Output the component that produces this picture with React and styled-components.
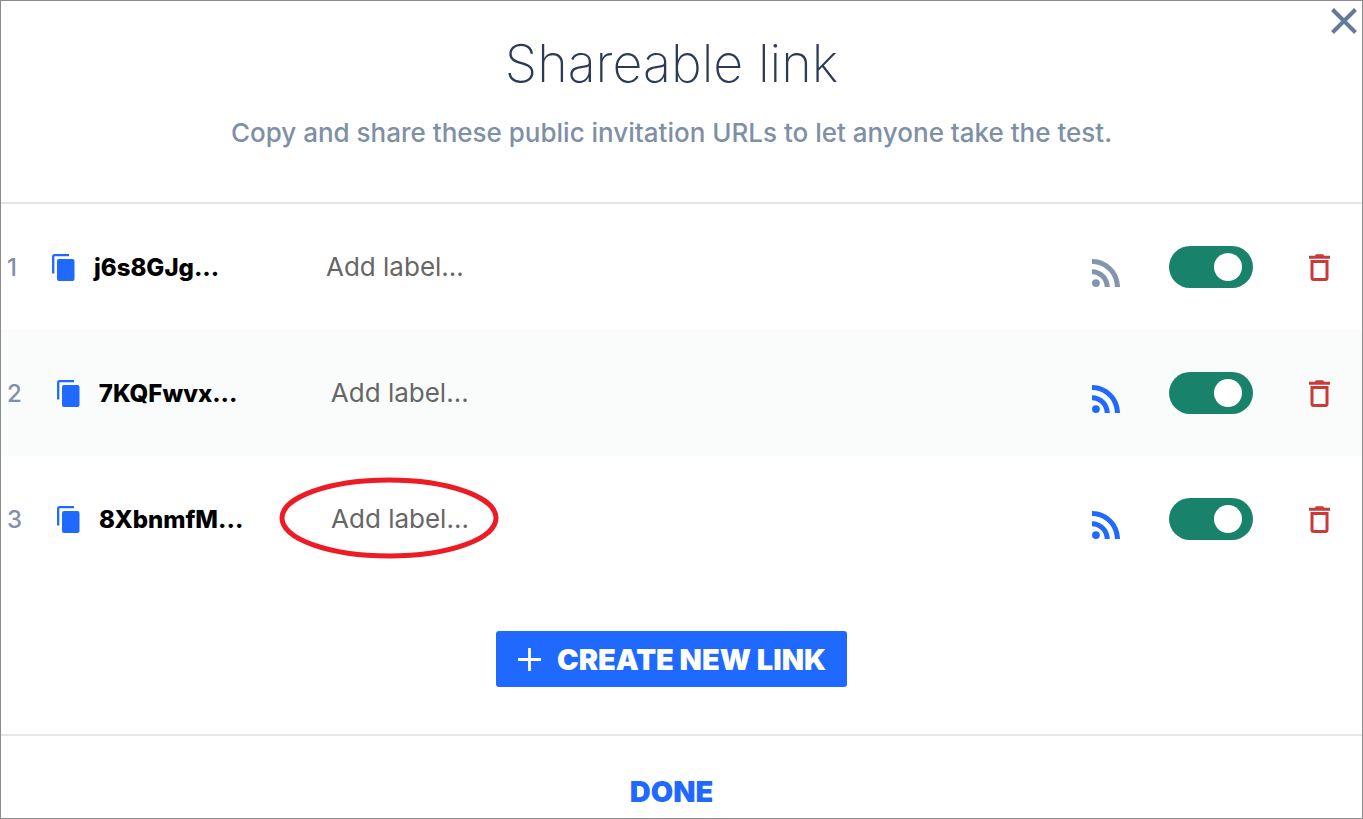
import React, { useState } from 'react'
import styled, { createGlobalStyle } from 'styled-components'

const GlobalStyle = createGlobalStyle`
  *, *::before, *::after {
    box-sizing: border-box;
  }

  body {
    margin: 0;
    background: #fff;
    font-family: Inter, 'Open Sans', sans-serif;
  }

  button, input {
    font: inherit;
  }
`

const Dialog = styled.main`
  position: relative;
  display: flex;
  flex-direction: column;
  min-height: 100vh;
  border: 1px solid #8c8c8c;
`

const PlainButton = styled.button.attrs({ type: 'button' })`
  display: flex;
  flex: none;
  padding: 0;
  border: 0;
  background: none;
  color: ${({ $color }) => $color};
  cursor: pointer;
`

const CloseButton = styled(PlainButton)`
  position: absolute;
  top: 7px;
  right: 5px;
`

const Header = styled.header`
  padding: 33px 32px 54px 12px;
  border-bottom: 2px solid #e6e6e6;
  text-align: center;
`

const Title = styled.h1`
  margin: 0;
  color: #2b3b56;
  font-size: 52px;
  font-weight: 200;
  line-height: 60px;
`

const Subtitle = styled.p`
  margin: 23px 0 0;
  color: #7e8fa6;
  font-size: 26px;
  font-weight: 500;
  line-height: 31px;
`

const LinkList = styled.ul`
  margin: 0;
  padding: 0;
  list-style: none;
`

const LinkRow = styled.li`
  display: flex;
  align-items: center;
  height: 126px;
  padding: 0 32px 0 6px;

  &:nth-child(even) {
    background: #fafcfb;
  }
`

const RowNumber = styled.span`
  margin-right: 35px;
  color: #8090a7;
  font-size: 24px;
  font-weight: 500;
`

const LinkName = styled.span`
  flex: none;
  width: 232px;
  margin-left: 19px;
  color: #000;
  font-size: 24px;
  font-weight: 800;
`

const LabelField = styled.div`
  position: relative;
  flex: 1;
`

const LabelInput = styled.input`
  display: block;
  width: 100%;
  padding: 0;
  border: 0;
  outline: none;
  background: none;
  color: #666;
  font-size: 26px;
  line-height: 32px;

  &::placeholder {
    color: #666;
    opacity: 1;
  }
`

const Highlight = styled.svg`
  position: absolute;
  top: -26px;
  left: -52px;
  pointer-events: none;
`

const FeedButton = styled(PlainButton)`
  margin: 12px 49px 0 24px;
`

const Switch = styled.input.attrs({ type: 'checkbox', role: 'switch' })`
  appearance: none;
  display: flex;
  flex: none;
  align-items: center;
  width: 84px;
  height: 42px;
  margin: 0 56px 0 0;
  padding: 0 11px;
  border-radius: 21px;
  background: #9aa5b5;
  cursor: pointer;

  &::before {
    content: '';
    width: 28px;
    height: 28px;
    border-radius: 50%;
    background: #fff;
  }

  &:checked {
    justify-content: flex-end;
    background: #19826a;
  }
`

const Actions = styled.div`
  display: flex;
  justify-content: center;
  padding: 49px 32px 47px 12px;
`

const CreateButton = styled.button.attrs({ type: 'button' })`
  display: flex;
  align-items: center;
  gap: 16px;
  height: 56px;
  padding: 0 21px 0 22px;
  border: 0;
  border-radius: 3px;
  background: #1f69ff;
  color: #fff;
  font-size: 29px;
  font-weight: 900;
  cursor: pointer;
`

const Footer = styled.footer`
  display: flex;
  justify-content: center;
  padding: 39px 32px 8px 12px;
  border-top: 2px solid #e6e6e6;
`

const DoneButton = styled(PlainButton)`
  font-size: 29px;
  font-weight: 900;
  line-height: 34px;
`

const CloseIcon = () => (
  <svg width="26" height="26" viewBox="0 0 26 26" aria-hidden="true">
    <path d="M1.5 1.5l23 23M24.5 1.5l-23 23" fill="none" stroke="currentColor" strokeWidth="4" />
  </svg>
)

const CopyIcon = () => (
  <svg width="23" height="27" viewBox="0 0 23 27" aria-hidden="true">
    <path d="M1.2 19.5V2.6Q1.2 1.2 2.6 1.2H17" fill="none" stroke="currentColor" strokeWidth="2.3" />
    <rect x="5" y="5" width="17.5" height="22" rx="2" fill="currentColor" />
  </svg>
)

const FeedIcon = () => (
  <svg width="28" height="28" viewBox="4 4.44 15.56 15.56" fill="currentColor" aria-hidden="true">
    <circle cx="6.18" cy="17.82" r="2.18" />
    <path d="M4 4.44v2.83c7.03 0 12.73 5.7 12.73 12.73h2.83c0-8.59-6.97-15.56-15.56-15.56zm0 5.66v2.83c3.9 0 7.07 3.17 7.07 7.07h2.83c0-5.47-4.43-9.9-9.9-9.9z" />
  </svg>
)

const TrashIcon = () => (
  <svg width="21" height="27" viewBox="0 0 21 27" aria-hidden="true">
    <path d="M0 1.8h5.8L7 .2h7l1.2 1.6H21v2.9H0z" fill="currentColor" />
    <path d="M3 7.4h15v16.7q0 1.4-1.4 1.4H4.4q-1.4 0-1.4-1.4z" fill="none" stroke="currentColor" strokeWidth="3" />
  </svg>
)

const PlusIcon = () => (
  <svg width="23" height="23" viewBox="0 0 23 23" aria-hidden="true">
    <path d="M11.5 0v23M0 11.5h23" fill="none" stroke="currentColor" strokeWidth="2.8" />
  </svg>
)

const INITIAL_LINKS = [
  { id: 'j6s8GJg...', hasFeed: false, isActive: true },
  { id: '7KQFwvx...', hasFeed: true, isActive: true },
  { id: '8XbnmfM...', hasFeed: true, isActive: true, isHighlighted: true },
]

const LinkItem = ({ link, number, onToggle, onRemove }) => (
  <LinkRow>
    <RowNumber>{number}</RowNumber>
    <PlainButton $color="#1f69ff" aria-label={`Copy link ${number}`}>
      <CopyIcon />
    </PlainButton>
    <LinkName>{link.id}</LinkName>
    <LabelField>
      <LabelInput placeholder="Add label..." aria-label={`Label for link ${number}`} />
      {link.isHighlighted && (
        <Highlight width="220" height="82" viewBox="0 0 220 82" aria-hidden="true">
          <ellipse cx="110" cy="41" rx="107" ry="38" fill="none" stroke="#ed1c24" strokeWidth="5" />
        </Highlight>
      )}
    </LabelField>
    <FeedButton $color={link.hasFeed ? '#1f69ff' : '#8494aa'} aria-label={`Feed for link ${number}`}>
      <FeedIcon />
    </FeedButton>
    <Switch checked={link.isActive} onChange={onToggle} aria-label={`Link ${number} active`} />
    <PlainButton $color="#c83b38" onClick={onRemove} aria-label={`Delete link ${number}`}>
      <TrashIcon />
    </PlainButton>
  </LinkRow>
)

const App = () => {
  const [links, setLinks] = useState(INITIAL_LINKS)

  const handleToggle = (id) => {
    setLinks(links.map(link => (
      link.id === id ? { ...link, isActive: !link.isActive } : link
    )))
  }

  const handleRemove = (id) => {
    setLinks(links.filter(link => link.id !== id))
  }

  return (
    <>
      <GlobalStyle />
      <Dialog>
        <CloseButton $color="#647997" aria-label="Close">
          <CloseIcon />
        </CloseButton>
        <Header>
          <Title>Shareable link</Title>
          <Subtitle>Copy and share these public invitation URLs to let anyone take the test.</Subtitle>
        </Header>
        <LinkList>
          {links.map((link, index) => (
            <LinkItem
              key={link.id}
              link={link}
              number={index + 1}
              onToggle={() => handleToggle(link.id)}
              onRemove={() => handleRemove(link.id)}
            />
          ))}
        </LinkList>
        <Actions>
          <CreateButton>
            <PlusIcon />
            CREATE NEW LINK
          </CreateButton>
        </Actions>
        <Footer>
          <DoneButton $color="#1f69ff">DONE</DoneButton>
        </Footer>
      </Dialog>
    </>
  )
}

export default App
